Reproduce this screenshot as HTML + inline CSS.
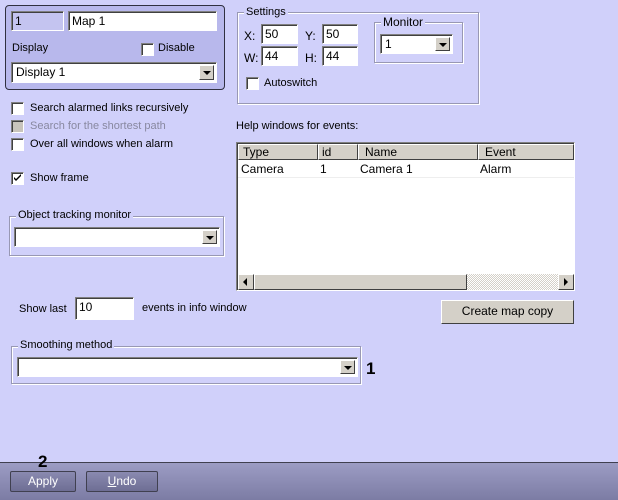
<!DOCTYPE html>
<html><head><style>
*{box-sizing:border-box;margin:0;padding:0}
body{width:618px;height:500px;background:#d0d0fa;font-family:"Liberation Sans",sans-serif;font-size:11px;color:#000;position:relative;overflow:hidden}
.a{position:absolute}
.in{position:absolute;background:#fff;border:1px solid;border-color:#808080 #fff #fff #808080;box-shadow:inset 1px 1px 0 #404040;padding:2px 3px;font-size:12px;line-height:14px}
.dd{position:absolute;background:#fff;border:1px solid;border-color:#808080 #fff #fff #808080;box-shadow:inset 1px 1px 0 #404040;padding:2px 4px;font-size:12px;line-height:14px}
.dd b{position:absolute;right:2px;top:2px;bottom:2px;width:15px;background:#d4d0c8;border:1px solid;border-color:#fff #404040 #404040 #fff}
.dd b:after{content:"";position:absolute;left:3px;top:5px;border-left:4px solid transparent;border-right:4px solid transparent;border-top:4px solid #000}
.cb{position:absolute;width:13px;height:13px;background:#fff;border:1px solid;border-color:#808080 #fff #fff #808080;box-shadow:inset 1px 1px 0 #404040}
.gb{position:absolute;border:1px solid #9898b4;box-shadow:1px 1px 0 #fff,inset 1px 1px 0 #fff}
.gl{position:absolute;background:#d0d0fa;padding:0 2px;font-size:11px;line-height:12px}
.t{position:absolute;font-size:11px;line-height:13px;white-space:nowrap}
.btn{position:absolute;background:#d4d0c8;border:1px solid;border-color:#fff #404040 #404040 #fff;text-align:center;font-size:11px}
</style></head><body>
<div class="a" style="left:5px;top:5px;width:220px;height:85px;background:#b8b8ec;border:1px solid #303040;border-radius:4px"></div>
<div class="in" style="left:11px;top:11px;width:53px;height:20px;background:#c4c4f0">1</div>
<div class="in" style="left:68px;top:11px;width:149px;height:20px">Map 1</div>
<div class="t" style="left:12px;top:42px">Display</div>
<div class="cb" style="left:141px;top:43px"></div>
<div class="t" style="left:158px;top:42px">Disable</div>
<div class="dd" style="left:11px;top:62px;width:206px;height:21px">Display 1<b></b></div>

<div class="cb" style="left:11px;top:102px"></div><div class="t" style="left:30px;top:102px">Search alarmed links recursively</div>
<div class="cb" style="left:11px;top:120px;background:#c8c4bc"></div><div class="t" style="left:30px;top:120px;color:#8888a0">Search for the shortest path</div>
<div class="cb" style="left:11px;top:138px"></div><div class="t" style="left:30px;top:138px">Over all windows when alarm</div>
<div class="cb" style="left:11px;top:172px"><svg width="11" height="11" style="position:absolute;left:0;top:0"><path d="M2 4l2 2 5-5v2l-5 5-2-2z" fill="#000"/></svg></div><div class="t" style="left:30px;top:172px">Show frame</div>

<div class="gb" style="left:9px;top:216px;width:215px;height:40px"></div>
<div class="gl" style="left:16px;top:209px">Object tracking monitor</div>
<div class="dd" style="left:14px;top:227px;width:206px;height:20px"><b></b></div>

<div class="t" style="left:19px;top:303px">Show last</div>
<div class="in" style="left:75px;top:297px;width:59px;height:23px">10</div>
<div class="t" style="left:142px;top:302px">events in info window</div>

<div class="gb" style="left:11px;top:346px;width:350px;height:38px"></div>
<div class="gl" style="left:18px;top:339px">Smoothing method</div>
<div class="dd" style="left:17px;top:357px;width:341px;height:20px"><b></b></div>
<div class="t" style="left:366px;top:360px;font-size:17px;line-height:18px;font-weight:bold">1</div>

<div class="gb" style="left:237px;top:12px;width:242px;height:92px"></div>
<div class="gl" style="left:244px;top:6px">Settings</div>
<div class="t" style="left:244px;top:30px;font-size:12px">X:</div>
<div class="in" style="left:261px;top:24px;width:37px;height:20px">50</div>
<div class="t" style="left:305px;top:30px;font-size:12px">Y:</div>
<div class="in" style="left:322px;top:24px;width:36px;height:20px">50</div>
<div class="t" style="left:244px;top:52px;font-size:12px">W:</div>
<div class="in" style="left:261px;top:46px;width:37px;height:20px">44</div>
<div class="t" style="left:305px;top:52px;font-size:12px">H:</div>
<div class="in" style="left:322px;top:46px;width:36px;height:20px">44</div>
<div class="gb" style="left:374px;top:22px;width:89px;height:41px"></div>
<div class="gl" style="left:381px;top:16px;font-size:12px">Monitor</div>
<div class="dd" style="left:380px;top:34px;width:73px;height:20px">1<b></b></div>
<div class="cb" style="left:246px;top:77px"></div><div class="t" style="left:264px;top:77px">Autoswitch</div>

<div class="t" style="left:236px;top:120px">Help windows for events:</div>
<div class="a" style="left:236px;top:142px;width:339px;height:149px;background:#fff;border:1px solid;border-color:#808080 #fff #fff #808080;box-shadow:inset 1px 1px 0 #404040"></div>
<div class="a" style="left:238px;top:144px;width:336px;height:16px;background:#d4d0c8"></div>
<div class="btn" style="left:238px;top:144px;width:80px;height:16px;text-align:left;padding-left:4px;line-height:14px;font-size:12px">Type</div>
<div class="btn" style="left:318px;top:144px;width:40px;height:16px;text-align:left;padding-left:3px;line-height:14px;font-size:12px">id</div>
<div class="btn" style="left:358px;top:144px;width:120px;height:16px;text-align:left;padding-left:6px;line-height:14px;font-size:12px">Name</div>
<div class="btn" style="left:478px;top:144px;width:96px;height:16px;text-align:left;padding-left:6px;line-height:14px;font-size:12px">Event</div>
<div class="t" style="left:241px;top:163px;font-size:12px">Camera</div>
<div class="t" style="left:320px;top:163px;font-size:12px">1</div>
<div class="t" style="left:360px;top:163px;font-size:12px">Camera 1</div>
<div class="t" style="left:480px;top:163px;font-size:12px">Alarm</div>
<div class="a" style="left:238px;top:177px;width:336px;height:1px;background:#eee"></div>
<div class="a" style="left:238px;top:274px;width:336px;height:16px;background:repeating-conic-gradient(#d4d0c8 0 25%,#fff 0 50%) 0 0/2px 2px"></div>
<div class="btn" style="left:238px;top:274px;width:16px;height:16px"><svg width="14" height="14"><path d="M4 7l4-4v8z"/></svg></div>
<div class="btn" style="left:254px;top:274px;width:213px;height:16px"></div>
<div class="btn" style="left:558px;top:274px;width:16px;height:16px"><svg width="14" height="14"><path d="M10 7l-4-4v8z" transform="translate(-1 0)"/></svg></div>

<div class="btn" style="left:441px;top:300px;width:133px;height:24px;line-height:21px;font-size:12px;border-color:#fff #404040 #404040 #fff">Create map copy</div>

<div class="a" style="left:0;top:462px;width:618px;height:38px;background:linear-gradient(#9c9cc4,#7c7ca4);border-top:1px solid #404050"></div>
<div class="a" style="left:10px;top:471px;width:66px;height:21px;background:linear-gradient(#8a8ab0,#6e6e94);border:1px solid #404050;border-radius:2px;color:#fff;text-align:center;line-height:19px;font-size:12px">Apply</div>
<div class="a" style="left:86px;top:471px;width:72px;height:21px;background:linear-gradient(#8a8ab0,#6e6e94);border:1px solid #404050;border-radius:2px;color:#fff;text-align:center;line-height:19px;font-size:12px"><u>U</u>ndo</div>
<div class="t" style="left:38px;top:453px;font-size:17px;line-height:18px;font-weight:bold">2</div>
</body></html>
